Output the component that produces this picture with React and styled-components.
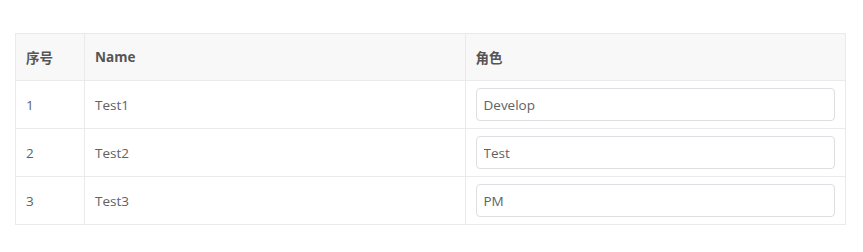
import styled, { createGlobalStyle } from 'styled-components';

const GlobalStyle = createGlobalStyle`
  body {
    margin: 0;
    background: #fff;
    font-family: 'Open Sans', 'Noto Sans CJK SC', sans-serif;
  }
`;

const Page = styled.div`
  padding: 33px 17px 0 15px;
`;

const Table = styled.table`
  width: 100%;
  table-layout: fixed;
  border-collapse: collapse;
  border: 1px solid #e8eaec;
  font-size: 13.5px;
  color: #606266;
`;

const HeadCell = styled.th`
  height: 46px;
  padding: 0 10px;
  text-align: left;
  font-weight: 700;
  color: #555;
  background: #f8f8f9;
  border: 1px solid #e8eaec;
  width: ${p => p.$width || 'auto'};
`;

const Cell = styled.td`
  height: 47px;
  padding: 0 10px;
  border: 1px solid #e8eaec;
  vertical-align: middle;
`;

const RoleInput = styled.input`
  display: block;
  box-sizing: border-box;
  width: 100%;
  height: 33px;
  padding: 0 7px;
  border: 1px solid #dcdee2;
  border-radius: 4px;
  font: inherit;
  color: #606266;
  outline: none;
`;

const rows = [
  { id: 1, name: 'Test1', role: 'Develop' },
  { id: 2, name: 'Test2', role: 'Test' },
  { id: 3, name: 'Test3', role: 'PM' },
];

export default function App() {
  return (
    <Page>
      <GlobalStyle />
      <Table>
        <thead>
          <tr>
            <HeadCell $width="48px">序号</HeadCell>
            <HeadCell>Name</HeadCell>
            <HeadCell>角色</HeadCell>
          </tr>
        </thead>
        <tbody>
          {rows.map(row => (
            <tr key={row.id}>
              <Cell>{row.id}</Cell>
              <Cell>{row.name}</Cell>
              <Cell>
                <RoleInput defaultValue={row.role} />
              </Cell>
            </tr>
          ))}
        </tbody>
      </Table>
    </Page>
  );
}
